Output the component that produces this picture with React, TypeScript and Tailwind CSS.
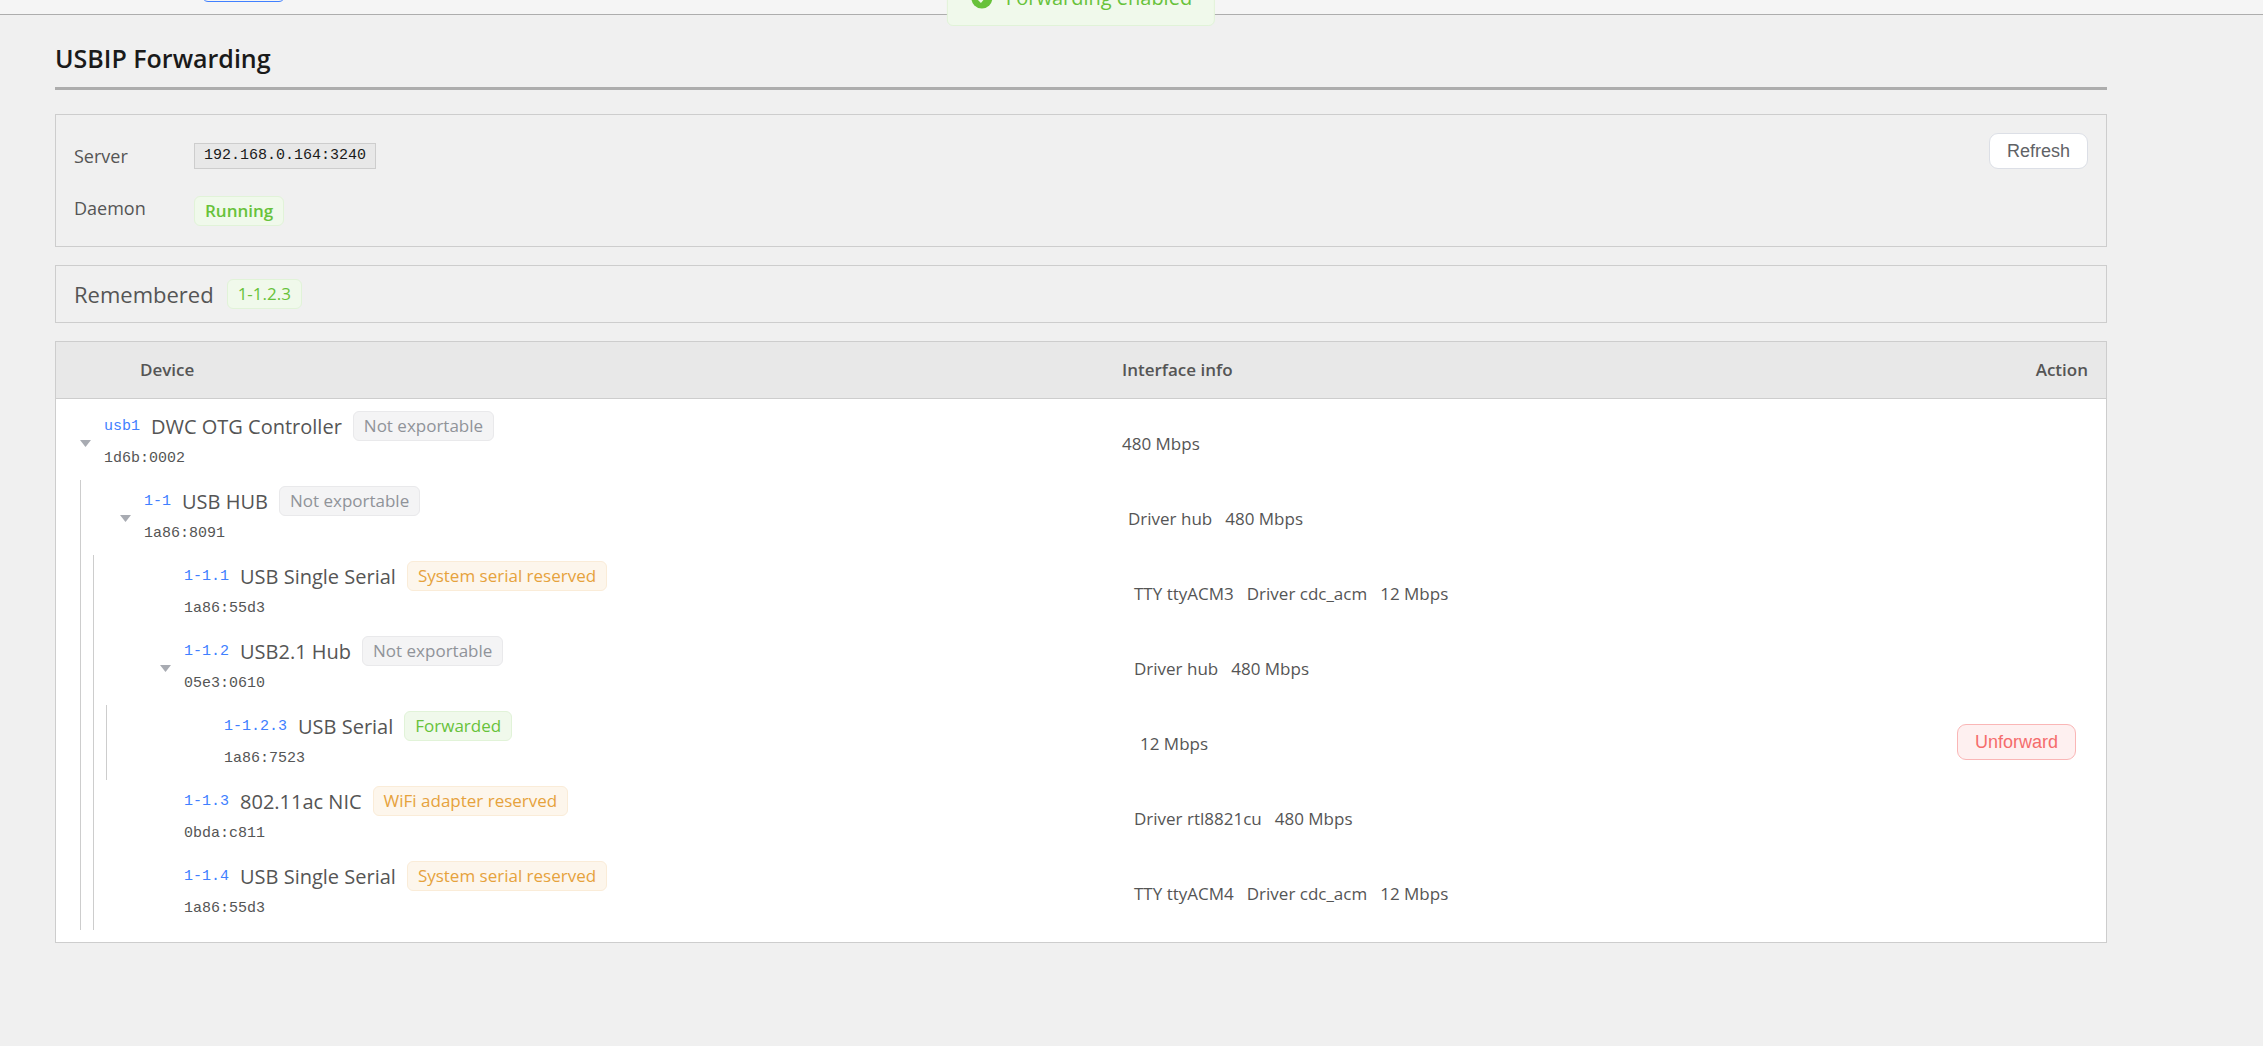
import clsx from "clsx";

type Tone = "info" | "warning" | "success";

type Device = {
  bus: string;
  name: string;
  id: string;
  depth: number;
  status: string;
  tone: Tone;
  info: string[];
  hasChildren?: boolean;
  forwarded?: boolean;
};

const devices: Device[] = [
  { bus: "usb1", name: "DWC OTG Controller", id: "1d6b:0002", depth: 0, status: "Not exportable", tone: "info", info: ["480 Mbps"], hasChildren: true },
  { bus: "1-1", name: "USB HUB", id: "1a86:8091", depth: 1, status: "Not exportable", tone: "info", info: ["Driver hub", "480 Mbps"], hasChildren: true },
  { bus: "1-1.1", name: "USB Single Serial", id: "1a86:55d3", depth: 2, status: "System serial reserved", tone: "warning", info: ["TTY ttyACM3", "Driver cdc_acm", "12 Mbps"] },
  { bus: "1-1.2", name: "USB2.1 Hub", id: "05e3:0610", depth: 2, status: "Not exportable", tone: "info", info: ["Driver hub", "480 Mbps"], hasChildren: true },
  { bus: "1-1.2.3", name: "USB Serial", id: "1a86:7523", depth: 3, status: "Forwarded", tone: "success", info: ["12 Mbps"], forwarded: true },
  { bus: "1-1.3", name: "802.11ac NIC", id: "0bda:c811", depth: 2, status: "WiFi adapter reserved", tone: "warning", info: ["Driver rtl8821cu", "480 Mbps"] },
  { bus: "1-1.4", name: "USB Single Serial", id: "1a86:55d3", depth: 2, status: "System serial reserved", tone: "warning", info: ["TTY ttyACM4", "Driver cdc_acm", "12 Mbps"] },
];

const toneClasses: Record<Tone, string> = {
  info: "border-[#e9e9eb] bg-[#f4f4f5] text-[#909399]",
  warning: "border-[#faecd8] bg-[#fdf6ec] text-[#e6a23c]",
  success: "border-[#e1f3d8] bg-[#f0f9eb] text-[#67c23a]",
};

function Tag({ tone, bold, children }: { tone: Tone; bold?: boolean; children: string }) {
  return (
    <span
      className={clsx(
        "inline-flex h-[30px] items-center whitespace-nowrap rounded-md border px-[10px] text-[17px]",
        toneClasses[tone],
        bold && "font-semibold",
      )}
    >
      {children}
    </span>
  );
}

function DeviceRow({ device }: { device: Device }) {
  return (
    <tr>
      <td className="p-0">
        <div className="flex h-[75px] pl-6">
          {Array.from({ length: device.depth }, (_, level) => (
            <span key={level} className="w-[13px] shrink-0 border-l border-[#cdcdcd]" />
          ))}
          <div className="flex" style={{ paddingLeft: device.depth * 27 }}>
            <span className="flex w-6 shrink-0 items-center pt-[3px]">
              {device.hasChildren && (
                <svg width="11" height="7" viewBox="0 0 11 7" fill="#a8abb2">
                  <path d="M0 0h11L5.500 7z" />
                </svg>
              )}
            </span>
            <div className="pt-[6px]">
              <div className="flex h-[30px] items-center gap-[11px]">
                <span className="pt-1 font-['Liberation_Mono',monospace] text-[15px] text-[#4080ff]">{device.bus}</span>
                <span className="whitespace-nowrap pt-[3px] text-[20px] text-[#555]">{device.name}</span>
                <Tag tone={device.tone}>{device.status}</Tag>
              </div>
              <div className="font-['Liberation_Mono',monospace] text-[15px] leading-9 text-[#555]">{device.id}</div>
            </div>
          </div>
        </div>
      </td>
      <td className="p-0">
        <div className="flex gap-[13px] pt-[3px] text-[17px] text-[#555]" style={{ paddingLeft: device.depth * 6 }}>
          {device.info.map((item) => (
            <span key={item} className="whitespace-nowrap">
              {item}
            </span>
          ))}
        </div>
      </td>
      <td className="py-0 pr-[30px] text-right">
        {device.forwarded && (
          <button
            type="button"
            className="h-9 rounded-[9px] border border-[#fab6b6] bg-[#fef0f0] px-[17px] font-['Liberation_Sans',sans-serif] text-[18px] text-[#f56c6c]"
          >
            Unforward
          </button>
        )}
      </td>
    </tr>
  );
}

function Toast() {
  return (
    <div
      role="status"
      className="absolute -top-[45px] left-1/2 flex h-14 -translate-x-1/2 items-center gap-3 whitespace-nowrap rounded-md border border-[#e1f3d8] bg-[#f0f9eb] px-[22px] text-[20px] text-[#67c23a]"
    >
      <svg width="24" height="24" viewBox="0 0 24 24">
        <circle cx="12" cy="12" r="10.500" fill="#67c23a" />
        <path d="M7 11.500l4 4 6-7" fill="none" stroke="#f0f9eb" strokeWidth="2" />
      </svg>
      Forwarding enabled
    </div>
  );
}

export default function App() {
  return (
    <div className="min-h-screen overflow-hidden bg-[#f0f0f0] font-['Open_Sans','Noto_Sans',sans-serif] text-[#555]">
      <header className="flex h-[15px] items-end border-b border-[#adadad] bg-[#f5f5f5] pb-3 pl-[202px]">
        <div className="h-9 w-[83px] shrink-0 rounded-md border border-[#4080ff] bg-[#f5f5f5]" />
      </header>

      <main className="relative ml-[55px] mr-[156px] pt-[25px]">
        <h1 className="border-b-[3px] border-[#adadad] pb-[11px] text-[25px] font-semibold leading-9 text-[#1a1a1a]">USBIP Forwarding</h1>

        <section className="mt-6 flex items-start justify-between border border-[#cdcdcd] px-[18px] pb-5 pt-[18px]">
          <dl className="grid grid-cols-[120px_auto] gap-y-[17px] text-[18px]">
            <dt className="flex h-[46px] items-center">Server</dt>
            <dd className="flex h-[46px] items-center">
              <code className="border border-[#cdcdcd] bg-[#e8e8e8] px-[9px] font-['Liberation_Mono',monospace] text-[15px] leading-6 text-[#1a1a1a]">
                192.168.0.164:3240
              </code>
            </dd>
            <dt className="leading-6">Daemon</dt>
            <dd className="flex">
              <Tag tone="success" bold>
                Running
              </Tag>
            </dd>
          </dl>
          <button
            type="button"
            className="h-9 rounded-[9px] border border-[#dcdfe6] bg-white px-[17px] font-['Liberation_Sans',sans-serif] text-[18px] text-[#606266]"
          >
            Refresh
          </button>
        </section>

        <section className="mt-[18px] flex h-[58px] items-center gap-[13px] border border-[#cdcdcd] px-[18px]">
          <h2 className="text-[22px]">Remembered</h2>
          <Tag tone="success">1-1.2.3</Tag>
        </section>

        <section className="mt-[18px] border border-[#cdcdcd] bg-white pb-3">
          <table className="w-full table-fixed border-collapse text-left">
            <thead className="border-b border-[#cdcdcd] bg-[#e8e8e8] text-[17px]">
              <tr className="h-14">
                <th className="w-[52%] py-0 pl-[84px] font-semibold">Device</th>
                <th className="p-0 font-semibold">Interface info</th>
                <th className="w-[12%] py-0 pr-[18px] text-right font-semibold">Action</th>
              </tr>
            </thead>
            <tbody className="before:block before:h-[6px] before:content-['']">
              {devices.map((device) => (
                <DeviceRow key={device.bus} device={device} />
              ))}
            </tbody>
          </table>
        </section>

        <Toast />
      </main>
    </div>
  );
}
